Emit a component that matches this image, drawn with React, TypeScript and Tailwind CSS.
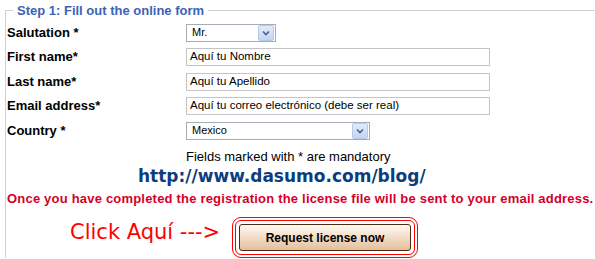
const Arrow = () => (
  <span className="flex h-[16px] w-[16px] items-center justify-center rounded-[2px] border border-[#b8c9e6] bg-gradient-to-b from-[#e2ebfd] to-[#c3d4f5]">
    <svg width="8" height="6" viewBox="0 0 8 6">
      <path d="M1 1.5 L4 4.5 L7 1.5" fill="none" stroke="#4d6185" strokeWidth="1.6" />
    </svg>
  </span>
)

const Select = ({ value, width }: { value: string; width: string }) => (
  <div className={`flex h-[18px] ${width} items-center justify-between border border-[#a5acb5] bg-white pl-[5px] pr-[1px]`}>
    <span className="text-[11px] leading-none text-black">{value}</span>
    <Arrow />
  </div>
)

const Input = ({ value }: { value: string }) => (
  <div className="flex h-[18px] w-[304px] items-center border border-[#c4c4c4] bg-white pl-[3px]">
    <span className="text-[11.5px] leading-none text-black">{value}</span>
  </div>
)

const rows = [
  { label: "Salutation *", h: "h-[25px]", field: <Select value="Mr." width="w-[90px]" /> },
  { label: "First name*", h: "h-[24px]", field: <Input value="Aquí tu Nombre" /> },
  { label: "Last name*", h: "h-[25px]", field: <Input value="Aquí tu Apellido" /> },
  { label: "Email address*", h: "h-[24px]", field: <Input value="Aquí tu correo electrónico (debe ser real)" /> },
  { label: "Country *", h: "h-[25px]", field: <Select value="Mexico" width="w-[184px]" /> },
]

export default function App() {
  return (
    <div className="h-[259px] w-[595px] overflow-hidden bg-white font-['Liberation_Sans',Arial,sans-serif]">
      <fieldset className="ml-[5px] mt-[3px] border-l border-t border-[#d0d0d0]">
        <legend className="ml-[7px] px-[4px] text-[13px] font-bold leading-[15px] text-[#3d63b5]">
          Step 1: Fill out the online form
        </legend>

        <div className="mt-[2px] flex flex-col">
          {rows.map((r) => (
            <div key={r.label} className={`flex ${r.h} items-center`}>
              <span className="w-[180px] pl-[1px] text-[13px] font-bold text-black">{r.label}</span>
              {r.field}
            </div>
          ))}
        </div>

        <p className="mt-[6px] pl-[180px] text-[13px] leading-[15px] text-black">
          Fields marked with * are mandatory
        </p>
        <p className="mt-[1px] pl-[132px] font-['DejaVu_Sans',Verdana,sans-serif] text-[17px] font-bold leading-[22px] text-[#0c3d7c]">
          http://www.dasumo.com/blog/
        </p>
        <p className="mt-[4px] pl-[1px] text-[13px] font-bold leading-[15px] tracking-[0.2px] text-[#d4002a]">
          Once you have completed the registration the license file will be sent to your email address.
        </p>

        <div className="mt-[11px] flex items-start pl-[64px]">
          <span className="mt-[5px] w-[162px] font-['DejaVu_Sans',Verdana,sans-serif] text-[21px] leading-none text-[#ff0000]">
            Click Aquí ---&gt;
          </span>
          <div className="rounded-[9px] border-[4px] border-double border-[#ff0000] p-[3px]">
            <button className="h-[27px] w-[172px] rounded-[3px] border border-[#4a2a10] bg-gradient-to-b from-[#fffaf4] to-[#e4bf9b] text-[12px] font-bold text-black">
              Request license now
            </button>
          </div>
        </div>
      </fieldset>
    </div>
  )
}
